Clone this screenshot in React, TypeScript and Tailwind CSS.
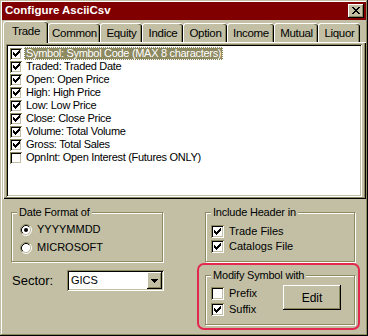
import React from "react";

const font = { fontFamily: '"Liberation Sans", Arial, sans-serif' };

const CheckMark = () => (
  <svg width="7" height="7" viewBox="0 0 7 7" shapeRendering="crispEdges" className="block">
    <path
      d="M0 2h1v3h-1z M1 3h1v3h-1z M2 4h1v3h-1z M3 3h1v3h-1z M4 2h1v3h-1z M5 1h1v3h-1z M6 0h1v3h-1z"
      fill="#000"
    />
  </svg>
);

const Check = ({ on, size = 13 }: { on: boolean; size?: number }) => (
  <div
    className="flex shrink-0 items-center justify-center bg-white shadow-[inset_1px_1px_0_#8d8961,inset_-1px_-1px_0_#ffffff,inset_2px_2px_0_#000000,inset_-2px_-2px_0_#c2bfa5]"
    style={{ width: size, height: size }}
  >
    {on && <CheckMark />}
  </div>
);

const Radio = ({ on }: { on: boolean }) => (
  <svg width="12" height="12" viewBox="0 0 12 12" className="block shrink-0">
    <circle cx="6" cy="6" r="4.5" fill="#fff" />
    <path d="M2.11 9.89 A5.5 5.5 0 0 1 9.89 2.11" stroke="#8d8961" fill="none" />
    <path d="M9.89 2.11 A5.5 5.5 0 0 1 2.11 9.89" stroke="#fff" fill="none" />
    <path d="M2.82 9.18 A4.5 4.5 0 0 1 9.18 2.82" stroke="#000" fill="none" />
    <path d="M9.18 2.82 A4.5 4.5 0 0 1 2.82 9.18" stroke="#c2bfa5" fill="none" />
    {on && <circle cx="6" cy="6" r="2" fill="#000" />}
  </svg>
);

const Group = ({
  label,
  className,
  children,
}: {
  label: string;
  className: string;
  children: React.ReactNode;
}) => (
  <div
    className={`relative shrink-0 border border-[#8d8961] shadow-[inset_1px_1px_0_#ffffff,1px_1px_0_#ffffff] ${className}`}
  >
    <span className="absolute left-[5px] top-[-7px] bg-[#c2bfa5] px-[2px] text-[11px] leading-[13px] tracking-[-0.2px] text-black">
      {label}
    </span>
    {children}
  </div>
);

const tabs = [
  { name: "Trade", w: 45 },
  { name: "Common", w: 52 },
  { name: "Equity", w: 42 },
  { name: "Indice", w: 41 },
  { name: "Option", w: 44 },
  { name: "Income", w: 47 },
  { name: "Mutual", w: 44 },
  { name: "Liquor", w: 42 },
];

const fields = [
  { t: "Symbol: Symbol Code (MAX 8 characters)", on: true },
  { t: "Traded: Traded Date", on: true },
  { t: "Open: Open Price", on: true },
  { t: "High: High Price", on: true },
  { t: "Low: Low Price", on: true },
  { t: "Close: Close Price", on: true },
  { t: "Volume: Total Volume", on: true },
  { t: "Gross: Total Sales", on: true },
  { t: "OpnInt: Open Interest (Futures ONLY)", on: false },
];

const raised =
  "shadow-[inset_-1px_-1px_0_#000000,inset_1px_1px_0_#ffffff,inset_-2px_-2px_0_#8d8961,inset_2px_2px_0_#c2bfa5]";

const sunken =
  "shadow-[inset_1px_1px_0_#8d8961,inset_-1px_-1px_0_#ffffff,inset_2px_2px_0_#000000,inset_-2px_-2px_0_#c2bfa5]";

export default function App() {
  return (
    <div
      style={font}
      className="flex h-[336px] w-[368px] flex-col bg-[#c2bfa5] p-[2px] text-[11px] text-black shadow-[inset_-1px_-1px_0_#000000,inset_1px_1px_0_#c2bfa5,inset_-2px_-2px_0_#8d8961,inset_2px_2px_0_#ffffff]"
    >
      {/* title bar */}
      <div className="flex h-[18px] shrink-0 items-center justify-between bg-[#800000] pl-[3px] pr-[2px]">
        <span className="text-[11.5px] font-bold leading-none text-white">Configure AsciiCsv</span>
        <div className={`flex h-[14px] w-[16px] items-center justify-center bg-[#c2bfa5] pb-[1px] ${raised}`}>
          <svg width="8" height="7" viewBox="0 0 8 7" shapeRendering="crispEdges" className="block">
            <path
              d="M0 0h2v1h-2z M6 0h2v1h-2z M1 1h2v1h-2z M5 1h2v1h-2z M2 2h4v1h-4z M3 3h2v1h-2z M2 4h4v1h-4z M1 5h2v1h-2z M5 5h2v1h-2z M0 6h2v1h-2z M6 6h2v1h-2z"
              fill="#000"
            />
          </svg>
        </div>
      </div>

      {/* tabs */}
      <div className="flex h-[22px] shrink-0 items-end pl-[1px]">
        {tabs.map((tab, i) =>
          i === 0 ? (
            <div
              key={tab.name}
              style={{ width: tab.w }}
              className="relative z-10 -mb-[1px] flex h-[22px] items-center justify-center rounded-t-[3px] border-l border-t border-white bg-[#c2bfa5] pb-[1px] text-[11.5px] tracking-[-0.3px] shadow-[inset_-1px_0_0_#000000,inset_-2px_0_0_#8d8961]"
            >
              {tab.name}
            </div>
          ) : (
            <div
              key={tab.name}
              style={{ width: tab.w }}
              className="flex h-[19px] items-center justify-center rounded-t-[3px] border-l border-t border-white bg-[#c2bfa5] pt-[1px] text-[11.5px] tracking-[-0.3px] shadow-[inset_-1px_0_0_#000000,inset_-2px_0_0_#8d8961]"
            >
              {tab.name}
            </div>
          )
        )}
      </div>

      {/* tab page */}
      <div className="ml-[1px] h-[157px] w-[363px] shrink-0 border-l border-t border-white shadow-[inset_-1px_-1px_0_#000000,inset_-2px_-2px_0_#8d8961]">
        <div className={`ml-[2px] mt-[1px] h-[153px] w-[356px] bg-white p-[2px] pt-[3px] ${sunken}`}>
          {fields.map((f, i) => (
            <div key={f.t} className="flex h-[13px] items-center pl-[2px]">
              <Check on={f.on} size={12} />
              <span
                className={`ml-[2px] px-[2px] leading-[13px] tracking-[-0.3px] ${
                  i === 0 ? "bg-[#8d8961] text-white outline-1 outline-dotted outline-[#ffffff] -outline-offset-1" : ""
                }`}
              >
                {f.t}
              </span>
            </div>
          ))}
        </div>
      </div>

      {/* bottom area */}
      <div className="flex flex-1">
        <div className="ml-[9px] flex w-[153px] flex-col">
          <Group label="Date Format of" className="mt-[13px] h-[50px] w-[152px]">
            <div className="flex flex-col gap-[5px] pl-[8px] pt-[10px]">
              <div className="flex h-[13px] items-center gap-[5px]">
                <Radio on />
                <span>YYYYMMDD</span>
              </div>
              <div className="flex h-[13px] items-center gap-[5px]">
                <Radio on={false} />
                <span>MICROSOFT</span>
              </div>
            </div>
          </Group>
          <div className="mt-[8px] flex items-center">
            <span className="ml-[1px] w-[55px] text-[13px]">Sector:</span>
            <div className={`flex h-[21px] w-[97px] items-center justify-between bg-white p-[2px] ${sunken}`}>
              <span className="pl-[2px] text-[11px]">GICS</span>
              <div className={`flex h-[17px] w-[15px] items-center justify-center bg-[#c2bfa5] ${raised}`}>
                <svg width="7" height="4" viewBox="0 0 7 4" shapeRendering="crispEdges" className="block">
                  <path d="M0 0h7v1h-7z M1 1h5v1h-5z M2 2h3v1h-3z M3 3h1v1h-1z" fill="#000" />
                </svg>
              </div>
            </div>
          </div>
        </div>

        <div className="ml-[33px] flex w-[163px] flex-col">
          <Group label="Include Header in" className="ml-[8px] mt-[13px] h-[50px] w-[150px]">
            <div className="flex flex-col gap-[2px] pl-[5px] pt-[12px]">
              <div className="flex h-[13px] items-center gap-[5px]">
                <Check on />
                <span className="text-[11px]">Trade Files</span>
              </div>
              <div className="flex h-[13px] items-center gap-[5px]">
                <Check on />
                <span className="text-[11px]">Catalogs File</span>
              </div>
            </div>
          </Group>
          <div className="mt-[1px] h-[67px] w-[163px] rounded-[7px] border-2 border-[#e3284f]">
            <Group label="Modify Symbol with" className="ml-[6px] mt-[10px] h-[50px] w-[150px]">
              <div className="flex pl-[5px] pt-[9px]">
                <div className="flex w-[72px] flex-col gap-[3px] pt-[2px]">
                  <div className="flex h-[13px] items-center gap-[5px]">
                    <Check on={false} />
                    <span className="text-[11px]">Prefix</span>
                  </div>
                  <div className="flex h-[13px] items-center gap-[5px]">
                    <Check on />
                    <span className="text-[11px]">Suffix</span>
                  </div>
                </div>
                <div className={`flex h-[25px] w-[58px] items-center justify-center bg-[#c2bfa5] text-[12px] ${raised}`}>
                  Edit
                </div>
              </div>
            </Group>
          </div>
        </div>
      </div>
    </div>
  );
}
